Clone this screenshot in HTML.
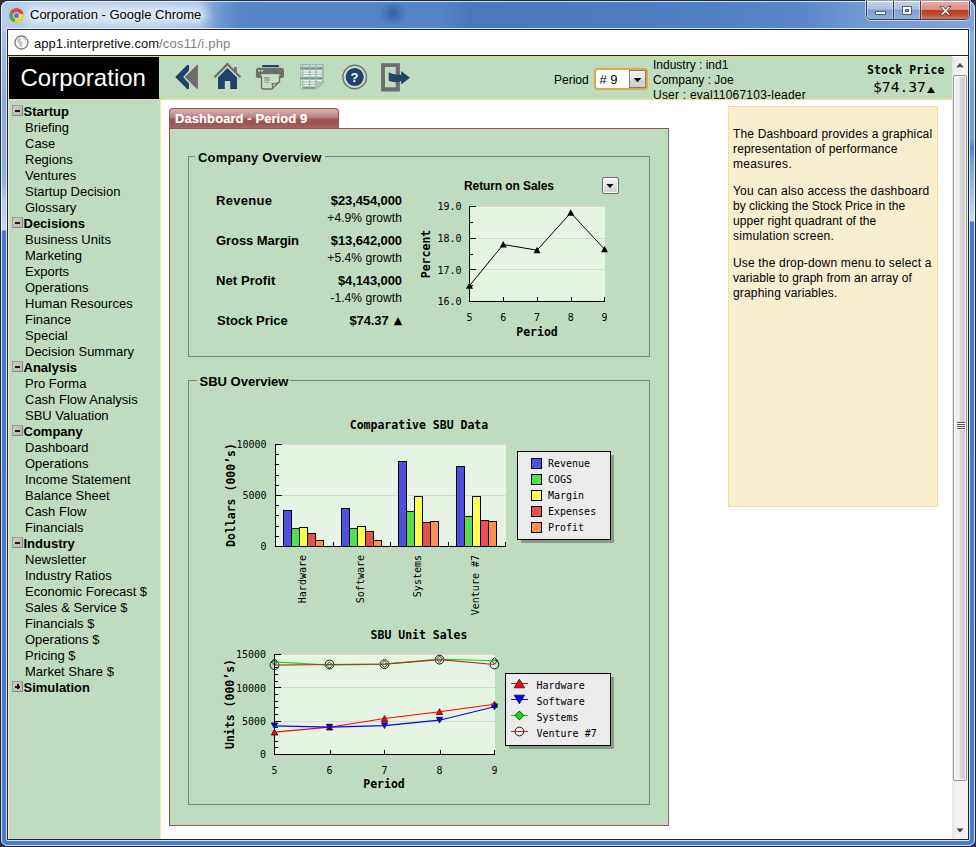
<!DOCTYPE html>
<html lang="en">
<head>
<meta charset="utf-8">
<title>Corporation</title>
<style>
*{box-sizing:border-box;margin:0;padding:0}
html,body{width:976px;height:847px;overflow:hidden;background:#2a3240}
body{position:relative;font-family:"Liberation Sans",sans-serif;font-size:13px;color:#000}
.abs{position:absolute}
#frame{position:absolute;left:0;top:0;width:976px;height:847px;border-radius:8px 8px 7px 7px;border:1px solid #1c2a3e;
 background:
  radial-gradient(ellipse 14px 12px at 392px 12px,rgba(30,70,130,.6) 0,rgba(40,85,150,.3) 60%,rgba(60,100,170,0) 100%) top/100% 30px no-repeat,
  linear-gradient(to right,rgba(70,115,185,0) 440px,rgba(66,110,182,.55) 470px,rgba(66,110,182,.4) 560px,rgba(70,115,185,0) 720px) top/100% 30px no-repeat,
  linear-gradient(to right,#b7cdea 0,#b0c8e8 150px,#9dbae3 200px,#6f98d3 218px,#5787ca 236px,#5585c9 260px,#5383c8 560px,#4f80c6 700px,#5986ca 800px,#7099d3 860px,#7fa4d8 976px) top/100% 30px no-repeat,
  linear-gradient(to bottom,#a9c1e6 30px,#8eaadc 100px,#8fb0e0 180px,#b5cbea 200px,#c5d7f0 229px,#4a7ac8 230px,#4c7dc6 100%) left/488px 100% no-repeat,
  linear-gradient(to bottom,#8fb0de 30px,#7a9cd4 100px,#7a9cd4 138px,#5580c8 147px,#7a9fd6 160px,#c5d8ef 215px,#c8daf0 220px,#4a7ac8 221px,#4c7dc6 100%) right/488px 100% no-repeat;}
#frame:before{content:"";position:absolute;left:0;top:0;right:0;bottom:0;border:1px solid rgba(255,255,255,.75);border-radius:7px 7px 6px 6px}
#title{left:30px;top:7px;font-size:13px;line-height:16px;color:#000;white-space:nowrap;
 text-shadow:0 0 5px rgba(255,255,255,.9),0 0 9px rgba(255,255,255,.7)}
#glow{left:24px;top:5px;width:184px;height:20px;border-radius:10px;background:rgba(240,246,253,.6);filter:blur(5px)}
#inner{left:6px;top:28px;width:964px;height:813px;border:1px solid rgba(235,243,252,.85);border-radius:1px}
#inner2{left:7px;top:29px;width:962px;height:811px;border:1px solid #1b2536;background:#fff}
#url{left:8px;top:30px;width:960px;height:25px;background:#fff;font-size:13px;line-height:25px;white-space:nowrap}
#url span.t{position:absolute;left:26px;top:.500px;color:#111}
#url span.t i{font-style:normal;color:#808080;letter-spacing:.2px}
#urlline{left:8px;top:55px;width:960px;height:1px;background:#1b2536}
#yline{left:8px;top:56px;width:944px;height:1px;background:#ecd872}
/* caption buttons */
#cap{left:866px;top:1px;width:104px;height:19px;border:1px solid #36445f;border-top:none;border-radius:0 0 5px 5px;overflow:hidden;box-shadow:0 0 0 1px rgba(255,255,255,.55)}
#cap div{position:absolute;top:0;height:18px;box-shadow:inset 0 1px 0 rgba(255,255,255,.8),inset 1px 0 0 rgba(255,255,255,.35),inset -1px 0 0 rgba(255,255,255,.35)}
#cmin{left:0;width:27px;background:linear-gradient(#c3d4ea 0,#a9c0e0 45%,#7f9fce 50%,#8fb0dc 100%);border-right:1px solid #36445f}
#cmax{left:27px;width:27px;background:linear-gradient(#c3d4ea 0,#a9c0e0 45%,#7f9fce 50%,#8fb0dc 100%);border-right:1px solid #36445f}
#ccls{left:54px;width:48px;background:linear-gradient(#eab2aa 0,#d98a80 48%,#bd3c28 52%,#c04a32 75%,#d27a60 100%)}
/* page */
#page{left:8px;top:57px;width:944px;height:782px;background:#fff;overflow:hidden}
#hdr{left:0;top:0;width:944px;height:42px;background:#c0dcc0}
#hdrline{left:0;top:42px;width:944px;height:1px;background:repeating-linear-gradient(to right,#efd866 0 1px,#f3e493 1px 2px)}
#logo{left:1px;top:0;width:150px;height:42px;background:#000;color:#fff;font-size:24px;line-height:42px;padding-left:11.500px;white-space:nowrap}
#side{left:0;top:43px;width:152px;height:739px;background:#c0dcc0}
#sideline{left:152px;top:43px;width:1px;height:739px;background:repeating-linear-gradient(to bottom,#f3d870 0 1px,#fbf6e2 1px 2px)}
#leftline{left:0;top:0;width:1px;height:782px;background:repeating-linear-gradient(to bottom,#f5de85 0 1px,#fbfaf0 1px 2px)}
#side ul{list-style:none;position:absolute;left:0;top:4px;width:152px}
#side li{height:16px;line-height:16px;font-size:13px;padding-left:17px;white-space:nowrap;position:relative}
#side li.h{font-weight:bold;padding-left:15.500px}
#side li.h:before{content:"";box-sizing:border-box;position:absolute;left:4px;top:1px;width:11px;height:11px;border:1px solid #9b9b9b;border-right-color:#858585;border-bottom-color:#858585;background:linear-gradient(135deg,#cacaca,#b6b6b6)}
#side li.h:after{content:"";position:absolute;left:7px;top:5.500px;width:5px;height:2px;background:#1a1a1a}
#side li.h.p i{position:absolute;left:8.500px;top:4px;width:2px;height:5px;background:#1a1a1a}
/* scrollbar */
#sb{left:952px;top:57px;width:16px;height:782px;background:linear-gradient(to right,#e4e4e4 0,#f0f0f0 20%,#f2f2f2 100%)}
#sbthumb{left:1px;top:18px;width:14px;height:706px;border:1px solid #979797;border-radius:2px;background:linear-gradient(to right,#f4f4f4 0,#eaeaea 45%,#d4d4d4 55%,#cfcfcf 100%);box-shadow:inset 0 0 0 1px rgba(255,255,255,.7)}
#sbgrip{left:3px;top:346px;width:8px;height:8px;background:repeating-linear-gradient(to bottom,#555 0 1px,#fff 1px 2px)}
/* header bits */
#psel{left:586px;top:11px;width:54px;height:22px;border:2px solid #dcab48;border-radius:4px;background:#fff;box-shadow:0 0 1px 0 rgba(220,171,72,.8)}
#psel span{position:absolute;left:3.500px;top:.500px;font-size:13px;line-height:18px;white-space:nowrap}
#psel b{position:absolute;left:33px;top:0;width:17px;height:18px;border:1px solid #7d7d7d;background:linear-gradient(#f3f3f3,#e6e6e6 45%,#d6d6d6 55%,#cdcdcd)}
#psel b svg{position:absolute;left:0;top:0}
#info{left:645px;top:1px;font-size:12px;line-height:15px;white-space:nowrap}
#info span{letter-spacing:.22px}
#sp1{left:859px;top:6px;letter-spacing:.12px;font-family:"DejaVu Sans Mono",monospace;font-weight:bold;font-size:11.500px;line-height:14px;white-space:nowrap}
#sp2{left:865px;top:21px;font-family:"DejaVu Sans Mono",monospace;font-size:14.670px;line-height:18px;white-space:nowrap}
#sp2 span{font-size:10.500px;display:inline-block;transform:scaleY(.78);transform-origin:50% 78%;margin-left:1px;font-family:"DejaVu Sans",sans-serif}
/* main */
#tab{left:161px;top:51px;width:170px;height:21px;letter-spacing:.08px;border:1px solid #9c5656;border-bottom:none;border-radius:4px 4px 0 0;color:#fff;font-weight:bold;font-size:13px;line-height:19px;padding-left:5px;white-space:nowrap;
 background:linear-gradient(#d3b2b2 0,#c79d9d 22%,#b47c7c 42%,#9c5555 52%,#9b5454 70%,#a86666 100%);text-shadow:0 0 1px rgba(255,240,220,.5)}
#panel{left:161px;top:71px;width:500px;height:698px;border:1px solid #9c5252;border-right-color:#7e6964;background:#c0dcc0}
.fs{border:1px solid #74897a}
.lg{background:#c0dcc0;padding:0 3px;font-weight:bold;font-size:13px;line-height:16px;white-space:nowrap;letter-spacing:.18px}
.kv{left:208px;width:186px;height:36px;font-size:13px;line-height:16px;white-space:nowrap}
.kv b{position:absolute;left:0;top:0}
.kv span{letter-spacing:-.1px}
.kv span{position:absolute;right:0;top:0;font-weight:bold}
.kv em{position:absolute;right:0;top:18px;font-style:normal;font-size:12px;line-height:14px;letter-spacing:.08px}
.kv small{font-size:11px;font-family:"DejaVu Sans",sans-serif;position:relative;top:-1px}
#ros{left:456px;top:122px;letter-spacing:-.1px;font-weight:bold;font-size:12px;line-height:15px;white-space:nowrap}
#rosbtn{left:594px;top:120px;width:17px;height:17px;border:1px solid #6e6e6e;border-radius:2px;background:linear-gradient(#f6f6f6,#e2e2e2 50%,#d2d2d2);box-shadow:inset 0 0 0 1px rgba(255,255,255,.8)}
#rosbtn svg{position:absolute;left:0;top:0}
#help{left:720px;top:49px;width:210px;height:401px;background:#f7eecf;border:1px dotted #f0d060;padding:20px 0 0 4px;font-size:12px;line-height:15px;white-space:nowrap}
#help p{margin-bottom:12px}
</style>
</head>
<body>
<div id="frame"></div>
<div id="glow" class="abs"></div>
<svg class="abs" style="left:8.500px;top:7.500px" width="15" height="15" viewBox="0 0 16 16">
 <circle cx="8" cy="8" r="7.6" fill="#dd4b3e"/>
 <path d="M8 8 L1.4 4.2 A7.6 7.6 0 0 0 5.6 15.2 Z" fill="#4aae48"/>
 <path d="M8 8 L5.6 15.2 A7.6 7.6 0 0 0 15.4 6 L8 6 Z" fill="#fbd334"/>
 <path d="M8 8 L1.4 4.2 A7.6 7.6 0 0 1 15.4 6 L8 6Z" fill="#dd4b3e"/>
 <circle cx="8" cy="8" r="3.6" fill="#f4f4f4"/>
 <circle cx="8" cy="8" r="2.8" fill="#3f83d8"/>
</svg>
<div id="title" class="abs">Corporation - Google Chrome</div>
<div id="cap" class="abs">
 <div id="cmin"><svg width="27" height="19"><rect x="8.5" y="10.5" width="10" height="3" fill="#fff" stroke="#535f75" stroke-width="1"/></svg></div>
 <div id="cmax"><svg width="27" height="19"><rect x="8.500" y="5.500" width="9" height="8" fill="#fff" stroke="#535f75" stroke-width="1"/><rect x="11.5" y="8.500" width="3" height="2" fill="#7f9fce" stroke="#535f75" stroke-width="1"/></svg></div>
 <div id="ccls"><svg width="48" height="19"><path d="M19 5.500h3.200l2.300 2.700 2.300-2.700H30l-3.900 4.300 3.900 4.200h-3.200l-2.300-2.600-2.300 2.600H19l3.900-4.200z" fill="#fff" stroke="#5a3a3a" stroke-width=".9"/></svg></div>
</div>
<div id="inner" class="abs"></div>
<div id="inner2" class="abs"></div>
<div id="url" class="abs">
 <svg class="abs" style="left:6px;top:5px" width="15" height="15" viewBox="0 0 15 15"><circle cx="7.500" cy="7.500" r="6.500" fill="#fafafa" stroke="#7b7b7b" stroke-width="1.300"/><path d="M4.200 3.200c1-.8 2.300-.6 2.700.2.300.8-.6 1.500-.4 2.300.3.800 1.600.9 2 1.700.3.700-.2 1.600-.3 2.400-.1.900-.5 2-1.400 2.100-.9 0-1.300-1.100-1.300-2 0-.8-.2-1.500-.8-2-.6-.6-1.400-1.100-1.500-2-.1-1 .3-2 1-2.700zM9.600 2.800c1 .3 1.900 1 2.400 2-.5.500-1.300.5-1.900.1-.5-.5-.9-1.400-.5-2.100z" fill="#c4c4c4"/></svg>
 <span class="t">app1.interpretive.com<i>/cos11/i.php</i></span>
</div>
<div id="urlline" class="abs"></div>
<div id="yline" class="abs"></div>

<div id="page" class="abs">
 <div id="hdr" class="abs"></div>
 <div id="logo" class="abs">Corporation</div>
 <div id="hdrline" class="abs"></div>
 <div id="side" class="abs">
  <ul>
   <li class="h">Startup</li><li>Briefing</li><li>Case</li><li>Regions</li><li>Ventures</li><li>Startup Decision</li><li>Glossary</li>
   <li class="h">Decisions</li><li>Business Units</li><li>Marketing</li><li>Exports</li><li>Operations</li><li>Human Resources</li><li>Finance</li><li>Special</li><li>Decision Summary</li>
   <li class="h">Analysis</li><li>Pro Forma</li><li>Cash Flow Analysis</li><li>SBU Valuation</li>
   <li class="h">Company</li><li>Dashboard</li><li>Operations</li><li>Income Statement</li><li>Balance Sheet</li><li>Cash Flow</li><li>Financials</li>
   <li class="h">Industry</li><li>Newsletter</li><li>Industry Ratios</li><li>Economic Forecast $</li><li>Sales &amp; Service $</li><li>Financials $</li><li>Operations $</li><li>Pricing $</li><li>Market Share $</li>
   <li class="h p"><i></i>Simulation</li>
  </ul>
 </div>
 <div id="sideline" class="abs"></div>
 <div id="leftline" class="abs"></div>
 <!-- toolbar icons (page coords = screen - (8,57)) -->
 <svg class="abs" style="left:160px;top:0" width="260" height="42" viewBox="168 57 260 42">
  <!-- back -->
  <path d="M184.800 77 L196.700 65.200 Q197.900 64.300 197.900 65.800 L197.900 88.200 Q197.900 89.700 196.700 88.800 Z" fill="#6d6d6d"/>
  <path d="M175.200 77 L186.800 65.300 Q188.200 64.300 189 65.600 L189 70.400 L183.200 77 L189 83.600 L189 88.400 Q188.200 89.700 186.800 88.700 Z" fill="#1f4467"/>
  <!-- home -->
  <path d="M213.700 76.500 L227.400 62.600 L234.200 69.500 L234.200 67 L236.900 67 L236.900 72.200 L241.200 76.500 L239.700 78.100 L227.400 65.700 L215.200 78.100 Z" fill="#6d6d6d"/>
  <path d="M218 77.600 L227.400 68 L237 77.600 L237 89 L230.200 89 L230.200 81 L224.800 81 L224.800 89 L218 89 Z" fill="#1f4467"/>
  <!-- printer -->
  <rect x="262" y="65.100" width="17.100" height="1.900" rx=".9" fill="#1f4467"/>
  <path d="M258.900 67.800 h22.100 a3 3 0 0 1 3 3 v5.300 a2 2 0 0 1 -2 2 h-2.500 v-2.200 a1.600 1.600 0 0 0 -1.600 -1.600 h-15.500 a1.600 1.600 0 0 0 -1.600 1.600 v2.200 h-2.900 a2 2 0 0 1 -2 -2 v-5.300 a3 3 0 0 1 3 -3z" fill="#6d6d6d"/>
  <rect x="258.200" y="69.900" width="1.800" height="1.600" fill="#d4e2d4"/><rect x="261.100" y="69.900" width="1.800" height="1.600" fill="#d4e2d4"/>
  <path d="M261.500 74.400 h18 v7.400 l-7.300 7.200 h-8.700 a2 2 0 0 1 -2 -2 z" fill="#c8dfc8"/>
  <path d="M261.500 76 v11 a2 2 0 0 0 2 2 h8.400 M279.500 76 v5.800" fill="none" stroke="#6d6d6d" stroke-width="1.400"/>
  <path d="M271.700 89.300 c1.300-1.700 1.100-3.900.4-5.600 2.100.4 5 .1 7.400-1.900z" fill="#e4efe4" stroke="#6d6d6d" stroke-width="1.200" stroke-linejoin="round"/>
  <path d="M264.100 77.700 h5.600 M264.100 80 h5.600" stroke="#8d978d" stroke-width="1.500"/><path d="M264.100 82.400 h5.600" stroke="#8d978d" stroke-width=".8"/>
  <!-- spreadsheet (disabled) -->
  <path d="M300 64.100 h23.800 v17.700 l-7.400 7.800 h-16.400z" fill="#a5b5a6"/>
  <g fill="#eef5ee"><rect x="300.9" y="70.1" width="1.3" height="1.5"/><rect x="303.3" y="70.1" width="5.7" height="1.5"/><rect x="310.2" y="70.1" width="5.1" height="1.5"/><rect x="316.7" y="70.1" width="5.4" height="1.5"/><rect x="300.9" y="72.5" width="1.3" height="1.5"/><rect x="303.3" y="72.5" width="5.7" height="1.5"/><rect x="310.2" y="72.5" width="5.1" height="1.5"/><rect x="316.7" y="72.5" width="5.4" height="1.5"/><rect x="300.9" y="75.0" width="1.3" height="1.5"/><rect x="303.3" y="75.0" width="5.7" height="1.5"/><rect x="310.2" y="75.0" width="5.1" height="1.5"/><rect x="316.7" y="75.0" width="5.4" height="1.5"/><rect x="300.9" y="79.9" width="1.3" height="1.5"/><rect x="303.3" y="79.9" width="5.7" height="1.5"/><rect x="310.2" y="79.9" width="5.1" height="1.5"/><rect x="316.7" y="79.9" width="5.4" height="1.5"/><rect x="300.9" y="82.4" width="1.3" height="1.5"/><rect x="303.3" y="82.4" width="5.7" height="1.5"/><rect x="310.2" y="82.4" width="5.1" height="1.5"/><rect x="316.7" y="82.4" width="3.2" height="1.5"/><rect x="300.9" y="84.8" width="1.3" height="1.5"/><rect x="303.3" y="84.8" width="5.7" height="1.5"/><rect x="310.2" y="84.8" width="5.1" height="1.5"/><rect x="300.9" y="87.2" width="1.3" height="1.5"/></g>
  <g fill="#cfe0d0"><rect x="300.9" y="65.2" width="1.3" height="1.5"/><rect x="303.3" y="65.2" width="5.7" height="1.5"/><rect x="310.2" y="65.2" width="5.1" height="1.5"/><rect x="316.7" y="65.2" width="5.4" height="1.5"/></g>
  <g fill="#6a93a6"><rect x="300.9" y="67.7" width="1.3" height="1.5"/><rect x="303.3" y="67.7" width="5.7" height="1.5"/><rect x="310.2" y="67.7" width="5.1" height="1.5"/><rect x="316.7" y="67.7" width="5.4" height="1.5"/><rect x="300.9" y="77.5" width="1.3" height="1.5"/><rect x="303.3" y="77.5" width="5.7" height="1.5"/><rect x="310.2" y="77.5" width="5.1" height="1.5"/><rect x="316.7" y="77.5" width="5.4" height="1.5"/><rect x="303.3" y="87.2" width="5.7" height="1.5"/><rect x="310.2" y="87.2" width="4.0" height="1.5"/></g>
  <path d="M316.400 89.600 v-7.800 h7.400z" fill="#b4c6b5"/>
  <path d="M316.400 89.600 l7.400 -7.800" stroke="#98a899" stroke-width=".8"/>
  <!-- help -->
  <circle cx="354.700" cy="77" r="11.800" fill="none" stroke="#707070" stroke-width="1.400"/>
  <circle cx="354.700" cy="77" r="9.700" fill="#d8e8e2"/>
  <circle cx="354.700" cy="77" r="9.100" fill="#1f4467"/>
  <text x="354.600" y="82.100" text-anchor="middle" font-family="Liberation Sans,sans-serif" font-weight="bold" font-size="13" fill="#fff">?</text>
  <!-- exit -->
  <path d="M381.100 63.300 h18.800 v28.100 h-18.800z M385 67 v20.200 h10.800 v-20.200z" fill="#6d6d6d" fill-rule="evenodd"/>
  <path d="M388.700 72.300 c2.500 1.800 7 2.600 12.500 2.400 v-3.600 l8.800 6.700 -8.800 6.800 v-3.500 c-4 1.500-8.500 1.500-12.500-.3z" fill="#1f4467"/>
 </svg>
 <!-- period -->
 <div class="abs" style="left:546px;top:14.500px;font-size:12px;line-height:16px;white-space:nowrap">Period</div>
 <div class="abs" id="psel"><span>#&nbsp;9</span><b><svg width="15" height="16"><path d="M3.600 7h7.800L7.500 11.200z" fill="#000"/></svg></b></div>
 <div class="abs" id="info">Industry : ind1<br>Company : Joe<br><span>User : eval11067103-leader</span></div>
 <div class="abs" id="sp1">Stock Price</div>
 <div class="abs" id="sp2">$74.37<span>&#9650;</span></div>
 <!--HEADER-END-->
 <!-- main panel: page coords = screen - (8,57) -->
 <div id="tab" class="abs">Dashboard - Period 9</div>
 <div id="panel" class="abs"></div>
 <div class="fs abs" style="left:180px;top:99px;width:462px;height:201px"></div>
 <div class="lg abs" style="left:187px;top:93px">Company Overview</div>
 <div class="fs abs" style="left:180px;top:323px;width:462px;height:425px"></div>
 <div class="lg abs" style="left:188.500px;top:317px;letter-spacing:0;padding:0 2px 0 3px">SBU Overview</div>
 <div class="kv abs" style="top:136px"><b style="letter-spacing:.28px">Revenue</b><span>$23,454,000</span><em>+4.9% growth</em></div>
 <div class="kv abs" style="top:176px"><b style="letter-spacing:-.07px">Gross Margin</b><span>$13,642,000</span><em>+5.4% growth</em></div>
 <div class="kv abs" style="top:216px"><b style="letter-spacing:.09px">Net Profit</b><span>$4,143,000</span><em>-1.4% growth</em></div>
 <div class="kv abs" style="top:256px"><b style="left:1px">Stock Price</b><span>$74.37 <small style="margin-left:1.500px">&#9650;</small></span></div>
 <div class="abs" id="ros">Return on Sales</div>
 <div class="abs" id="rosbtn"><svg width="14" height="14"><path d="M3.500 6h7L7 10z" fill="#000"/></svg></div>
<!--CHARTS-->
<svg class="abs" style="left:161px;top:43px" width="520" height="739" viewBox="169 100 520 739" font-family="DejaVu Sans Mono,monospace" font-size="10">
<g shape-rendering="crispEdges">
<rect x="469.5" y="206" width="135" height="95.5" fill="#e6f5e3"/>
<path d="M469.5 269.5H604.5" stroke="#dcd3d8" stroke-width="1"/>
<path d="M469.5 238.5H604.5" stroke="#dcd3d8" stroke-width="1"/>
<path d="M469.5 206.5H604.5" stroke="#dcd3d8" stroke-width="1"/>
<path d="M469.5 206V301.5H605" fill="none" stroke="#000" stroke-width="1"/>
<path d="M469.5 285.5h3M469.5 269.5h6M469.5 254.5h3M469.5 238.5h6M469.5 222.5h3M469.5 206.5h6M503.5 301.5v-5M537.5 301.5v-5M571.5 301.5v-5M604.5 301.5v-5" stroke="#000" stroke-width="1" fill="none"/>
</g>
<polyline points="469.5,285.67 503.25,244.5 537,250.2 570.75,212.83 604.5,249.25" fill="none" stroke="#000" stroke-width="1"/>
<path d="M469.5 282.17l3.5 6.500h-7z" fill="#000"/>
<path d="M503.25 241l3.5 6.500h-7z" fill="#000"/>
<path d="M537 246.7l3.5 6.500h-7z" fill="#000"/>
<path d="M570.75 209.33l3.5 6.500h-7z" fill="#000"/>
<path d="M604.5 245.75l3.5 6.500h-7z" fill="#000"/>
<text x="461.500" y="305.3" text-anchor="end">16.0</text>
<text x="461.500" y="273.63" text-anchor="end">17.0</text>
<text x="461.500" y="241.97" text-anchor="end">18.0</text>
<text x="461.500" y="210.3" text-anchor="end">19.0</text>
<text x="469.5" y="320.500" text-anchor="middle">5</text>
<text x="503.25" y="320.500" text-anchor="middle">6</text>
<text x="537" y="320.500" text-anchor="middle">7</text>
<text x="570.75" y="320.500" text-anchor="middle">8</text>
<text x="604.5" y="320.500" text-anchor="middle">9</text>
<text x="537" y="335.500" text-anchor="middle" font-weight="bold" font-size="11.500">Period</text>
<text transform="translate(429.500 254) rotate(-90)" text-anchor="middle" font-weight="bold" font-size="11.500">Percent</text>
<text x="419" y="429" text-anchor="middle" font-weight="bold" font-size="11.500">Comparative SBU Data</text>
<g shape-rendering="crispEdges">
<rect x="275.5" y="444" width="230" height="102.5" fill="#e6f5e3"/>
<path d="M275.5 495.5H505.5" stroke="#dcd3d8" stroke-width="1"/>
<path d="M275.5 444.5H505.5" stroke="#dcd3d8" stroke-width="1"/>
<rect x="283.5" y="510.5" width="8" height="36" fill="#5050e0" stroke="#000" stroke-width="1"/>
<rect x="291.5" y="528.5" width="8" height="18" fill="#50e050" stroke="#000" stroke-width="1"/>
<rect x="299.5" y="527.5" width="8" height="19" fill="#ffff50" stroke="#000" stroke-width="1"/>
<rect x="307.5" y="533.5" width="8" height="13" fill="#e85050" stroke="#000" stroke-width="1"/>
<rect x="315.5" y="540.5" width="8" height="6" fill="#ff9050" stroke="#000" stroke-width="1"/>
<rect x="341.5" y="508.5" width="8" height="38" fill="#5050e0" stroke="#000" stroke-width="1"/>
<rect x="349.5" y="528.5" width="8" height="18" fill="#50e050" stroke="#000" stroke-width="1"/>
<rect x="357.5" y="526.5" width="8" height="20" fill="#ffff50" stroke="#000" stroke-width="1"/>
<rect x="365.5" y="531.5" width="8" height="15" fill="#e85050" stroke="#000" stroke-width="1"/>
<rect x="373.5" y="540.5" width="8" height="6" fill="#ff9050" stroke="#000" stroke-width="1"/>
<rect x="398.5" y="461.5" width="8" height="85" fill="#5050e0" stroke="#000" stroke-width="1"/>
<rect x="406.5" y="511.5" width="8" height="35" fill="#50e050" stroke="#000" stroke-width="1"/>
<rect x="414.5" y="496.5" width="8" height="50" fill="#ffff50" stroke="#000" stroke-width="1"/>
<rect x="422.5" y="522.5" width="8" height="24" fill="#e85050" stroke="#000" stroke-width="1"/>
<rect x="430.5" y="521.5" width="8" height="25" fill="#ff9050" stroke="#000" stroke-width="1"/>
<rect x="456.5" y="466.5" width="8" height="80" fill="#5050e0" stroke="#000" stroke-width="1"/>
<rect x="464.5" y="516.5" width="8" height="30" fill="#50e050" stroke="#000" stroke-width="1"/>
<rect x="472.5" y="496.5" width="8" height="50" fill="#ffff50" stroke="#000" stroke-width="1"/>
<rect x="480.5" y="520.5" width="8" height="26" fill="#e85050" stroke="#000" stroke-width="1"/>
<rect x="488.5" y="521.5" width="8" height="25" fill="#ff9050" stroke="#000" stroke-width="1"/>
<path d="M275.5 444V546.5H506" fill="none" stroke="#000" stroke-width="1"/>
<path d="M275.5 536.5h3M275.5 526.5h3M275.5 515.5h3M275.5 505.5h3M275.5 495.5h6M275.5 485.5h3M275.5 475.5h3M275.5 464.5h3M275.5 454.5h3M275.5 444.5h6M333.5 546.5v-5M390.5 546.5v-5M448.5 546.5v-5M505.5 546.5v-5" stroke="#000" stroke-width="1" fill="none"/>
</g>
<text x="266.500" y="550.3" text-anchor="end">0</text>
<text x="266.500" y="499.3" text-anchor="end">5000</text>
<text x="266.500" y="448.3" text-anchor="end">10000</text>
<text transform="translate(306.45 555) rotate(-90)" text-anchor="end">Hardware</text>
<text transform="translate(363.95 555) rotate(-90)" text-anchor="end">Software</text>
<text transform="translate(421.45 555) rotate(-90)" text-anchor="end">Systems</text>
<text transform="translate(478.95 555) rotate(-90)" text-anchor="end">Venture #7</text>
<text transform="translate(234.500 495) rotate(-90)" text-anchor="middle" font-weight="bold" font-size="11.500">Dollars (000’s)</text>
<g shape-rendering="crispEdges"><rect x="521" y="455" width="93" height="88" fill="#8a9a8a"/><rect x="517.500" y="451.500" width="93" height="88" fill="#ebebeb" stroke="#000"/>
<rect x="531.500" y="458.5" width="10" height="10" fill="#5050e0" stroke="#000"/>
<rect x="531.500" y="474.5" width="10" height="10" fill="#50e050" stroke="#000"/>
<rect x="531.500" y="490.5" width="10" height="10" fill="#ffff50" stroke="#000"/>
<rect x="531.500" y="506.5" width="10" height="10" fill="#e85050" stroke="#000"/>
<rect x="531.500" y="522.5" width="10" height="10" fill="#ff9050" stroke="#000"/>
</g>
<text x="548" y="467.3">Revenue</text>
<text x="548" y="483.3">COGS</text>
<text x="548" y="499.3">Margin</text>
<text x="548" y="515.3">Expenses</text>
<text x="548" y="531.3">Profit</text>
<text x="419" y="639" text-anchor="middle" font-weight="bold" font-size="11.500">SBU Unit Sales</text>
<g shape-rendering="crispEdges">
<rect x="274.5" y="654" width="220" height="100.5" fill="#e6f5e3"/>
<path d="M274.5 721.5H494.5" stroke="#dcd3d8" stroke-width="1"/>
<path d="M274.5 687.5H494.5" stroke="#dcd3d8" stroke-width="1"/>
<path d="M274.5 654.5H494.5" stroke="#dcd3d8" stroke-width="1"/>
<path d="M274.5 654V754.5H495" fill="none" stroke="#000" stroke-width="1"/>
<path d="M274.5 747.5h3M274.5 741.5h3M274.5 734.5h3M274.5 727.5h3M274.5 721.5h6M274.5 714.5h3M274.5 707.5h3M274.5 701.5h3M274.5 694.5h3M274.5 687.5h6M274.5 681.5h3M274.5 674.5h3M274.5 667.5h3M274.5 661.5h3M274.5 654.5h6M330.5 754.5v-5M384.5 754.5v-5M440.5 754.5v-5M494.5 754.5v-5" stroke="#000" stroke-width="1" fill="none"/>
</g>
<path d="M274.5 729.27l3.2 5.8h-6.4z" fill="#ff0000" stroke="#000" stroke-width=".7"/>
<path d="M329.5 724.27l3.2 5.8h-6.4z" fill="#ff0000" stroke="#000" stroke-width=".7"/>
<path d="M384.5 715.6l3.2 5.8h-6.4z" fill="#ff0000" stroke="#000" stroke-width=".7"/>
<path d="M439.5 708.8l3.2 5.8h-6.4z" fill="#ff0000" stroke="#000" stroke-width=".7"/>
<path d="M494.5 701.33l3.2 5.8h-6.4z" fill="#ff0000" stroke="#000" stroke-width=".7"/>
<path d="M274.5 728.73l3.2 -5.8h-6.4z" fill="#0000ff" stroke="#000" stroke-width=".7"/>
<path d="M329.5 730.07l3.2 -5.8h-6.4z" fill="#0000ff" stroke="#000" stroke-width=".7"/>
<path d="M384.5 728.53l3.2 -5.8h-6.4z" fill="#0000ff" stroke="#000" stroke-width=".7"/>
<path d="M439.5 723.07l3.2 -5.8h-6.4z" fill="#0000ff" stroke="#000" stroke-width=".7"/>
<path d="M494.5 709.73l3.2 -5.8h-6.4z" fill="#0000ff" stroke="#000" stroke-width=".7"/>
<path d="M274.5 658.63l3.2 3.2l-3.2 3.2l-3.2 -3.2z" fill="none" stroke="#000" stroke-width=".8"/>
<path d="M329.5 661.97l3.2 3.2l-3.2 3.2l-3.2 -3.2z" fill="none" stroke="#000" stroke-width=".8"/>
<path d="M384.5 660.97l3.2 3.2l-3.2 3.2l-3.2 -3.2z" fill="none" stroke="#000" stroke-width=".8"/>
<path d="M439.5 655.97l3.2 3.2l-3.2 3.2l-3.2 -3.2z" fill="none" stroke="#000" stroke-width=".8"/>
<path d="M494.5 657.57l3.2 3.2l-3.2 3.2l-3.2 -3.2z" fill="none" stroke="#000" stroke-width=".8"/>
<circle cx="274.5" cy="665.17" r="4.4" fill="none" stroke="#000" stroke-width=".9"/>
<circle cx="329.5" cy="664.5" r="4.4" fill="none" stroke="#000" stroke-width=".9"/>
<circle cx="384.5" cy="664.17" r="4.4" fill="none" stroke="#000" stroke-width=".9"/>
<circle cx="439.5" cy="659.63" r="4.4" fill="none" stroke="#000" stroke-width=".9"/>
<circle cx="494.5" cy="664.5" r="4.4" fill="none" stroke="#000" stroke-width=".9"/>
<polyline points="274.5,732.17 329.5,727.17 384.5,718.5 439.5,711.7 494.5,704.23" fill="none" stroke="#ff0000" stroke-width="1.100"/>
<polyline points="274.5,725.83 329.5,727.17 384.5,725.63 439.5,720.17 494.5,706.83" fill="none" stroke="#0000ff" stroke-width="1.100"/>
<polyline points="274.5,661.83 329.5,665.17 384.5,664.17 439.5,659.17 494.5,660.77" fill="none" stroke="#10e010" stroke-width="1.100"/>
<polyline points="274.5,665.17 329.5,664.5 384.5,664.17 439.5,659.63 494.5,664.5" fill="none" stroke="#b03030" stroke-width="1.100"/>
<text x="266" y="758.3" text-anchor="end">0</text>
<text x="266" y="724.97" text-anchor="end">5000</text>
<text x="266" y="691.63" text-anchor="end">10000</text>
<text x="266" y="658.3" text-anchor="end">15000</text>
<text x="274.5" y="773.500" text-anchor="middle">5</text>
<text x="329.5" y="773.500" text-anchor="middle">6</text>
<text x="384.5" y="773.500" text-anchor="middle">7</text>
<text x="439.5" y="773.500" text-anchor="middle">8</text>
<text x="494.5" y="773.500" text-anchor="middle">9</text>
<text x="384" y="788" text-anchor="middle" font-weight="bold" font-size="11.500">Period</text>
<text transform="translate(233.500 704) rotate(-90)" text-anchor="middle" font-weight="bold" font-size="11.500">Units (000’s)</text>
<g shape-rendering="crispEdges"><rect x="509" y="677" width="105" height="72" fill="#8a9a8a"/><rect x="505.500" y="673.500" width="105" height="72" fill="#ebebeb" stroke="#000"/></g>
<path d="M511 683.5H528" stroke="#ff0000" stroke-width="1"/>
<path d="M519.4 679.15l5.2 8.7h-10.4z" fill="#ff0000" stroke="#000" stroke-width=".7"/>
<text x="536.500" y="689.1">Hardware</text>
<path d="M511 699.5H528" stroke="#0000ff" stroke-width="1"/>
<path d="M519.4 703.85l5.2 -8.7h-10.4z" fill="#0000ff" stroke="#000" stroke-width=".7"/>
<text x="536.500" y="705.1">Software</text>
<path d="M511 715.5H528" stroke="#10e010" stroke-width="1"/>
<path d="M519.4 711.1l4.4 4.4l-4.4 4.4l-4.4 -4.4z" fill="#10e010" stroke="#000" stroke-width=".8"/>
<text x="536.500" y="721.1">Systems</text>
<path d="M511 731.5H528" stroke="#b03030" stroke-width="1"/>
<circle cx="519.4" cy="731.5" r="4.4" fill="none" stroke="#000" stroke-width=".9"/>
<path d="M511 731.5H528" stroke="#b03030" stroke-width="1"/>
<text x="536.500" y="737.1">Venture #7</text>
</svg>
<!--/CHARTS-->
 <div id="help" class="abs">
  <p><span style="letter-spacing:0.17px">The Dashboard provides a graphical</span><br><span style="letter-spacing:0.13px">representation of performance</span><br><span style="letter-spacing:0.34px">measures.</span></p>
  <p><span style="letter-spacing:0.22px">You can also access the dashboard</span><br><span style="letter-spacing:0px">by clicking the Stock Price in the</span><br><span style="letter-spacing:0.07px">upper right quadrant of the</span><br><span style="letter-spacing:0.24px">simulation screen.</span></p>
  <p><span style="letter-spacing:0.17px">Use the drop-down menu to select a</span><br><span style="letter-spacing:0.04px">variable to graph from an array of</span><br><span style="letter-spacing:0.16px">graphing variables.</span></p>
 </div>
</div>
<div id="sb" class="abs">
 <svg class="abs" style="left:0;top:0" width="16" height="17"><path d="M4.300 10.200L8 6l3.700 4.200H10.200L8 8.800 5.800 10.200z" fill="#3a3a3a"/><path d="M5 10.200L8 7l3 3.200z" fill="#555"/></svg>
 <div id="sbthumb" class="abs"><div id="sbgrip" class="abs"></div></div>
 <svg class="abs" style="left:0;top:765px" width="16" height="17"><path d="M4.500 6.500h7L8 10.500z" fill="#3c3c3c"/></svg>
</div>
</body>
</html>
